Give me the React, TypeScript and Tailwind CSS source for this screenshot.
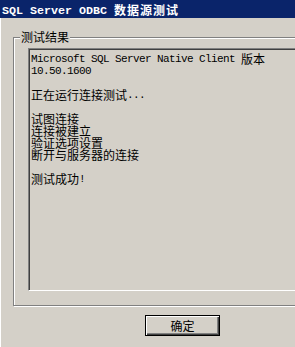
import React from "react";

const CJK = /([\u3000-\u303f\u3400-\u9fff\uff00-\uffef]+)/;

function Mixed({ text, cjkClass }: { text: string; cjkClass: string }) {
  const parts = text.split(CJK).filter((p) => p.length > 0);
  return (
    <>
      {parts.map((p, i) =>
        CJK.test(p) ? (
          <span key={i} className={cjkClass}>
            {p}
          </span>
        ) : (
          <span key={i}>{p}</span>
        )
      )}
    </>
  );
}

const bodyCjk =
  "font-['Noto_Sans_CJK_SC',sans-serif] text-[12px] tracking-normal leading-[0] align-[-1.5px]";
const titleCjk =
  "font-['Noto_Sans_CJK_SC',sans-serif] text-[12px] font-bold tracking-[1px] leading-[0] align-[-1px]";

const lines = [
  "Microsoft SQL Server Native Client 版本",
  "10.50.1600",
  "",
  "正在运行连接测试...",
  "",
  "试图连接",
  "连接被建立",
  "验证选项设置",
  "断开与服务器的连接",
  "",
  "测试成功!",
];

export default function App() {
  return (
    <div className="w-[295px] h-[347px] overflow-hidden bg-[#d4d0c8] text-black font-['Liberation_Mono',monospace]">
      <div className="h-[18px] bg-[#0a246a] pl-[2px] pt-[3px] leading-[16px] text-[11.67px] font-bold text-white whitespace-pre overflow-hidden">
        <Mixed text="SQL Server ODBC 数据源测试" cjkClass={titleCjk} />
      </div>
      <div className="flex flex-col border-l border-white h-[329px]">
        <div className="relative mt-[19px] ml-[12px] w-[400px] h-[269px] shrink-0 border border-[#808080] shadow-[inset_1px_1px_0_#fff,1px_1px_0_#fff]">
          <div className="absolute left-[6px] top-[-7px] h-[12px] px-[1px] bg-[#d4d0c8] font-['Noto_Sans_CJK_SC',sans-serif] text-[12px] leading-[12px] whitespace-nowrap">
            测试结果
          </div>
          <div className="mt-[10px] ml-[14px] w-[400px] h-[243px] border border-t-[#808080] border-l-[#808080] border-b-white border-r-white shadow-[inset_1px_1px_0_#404040] pt-[4px] pl-[2px] text-[11px] tracking-[-0.6px]">
            {lines.map((l, i) => (
              <div key={i} className="h-[12px] leading-[12px] whitespace-pre">
                <Mixed text={l} cjkClass={bodyCjk} />
              </div>
            ))}
          </div>
        </div>
        <button className="mt-[9px] ml-[144px] w-[75px] h-[21px] shrink-0 border border-black bg-[#d4d0c8] shadow-[inset_1px_1px_0_#fff,inset_-1px_-1px_0_#404040,inset_-2px_-2px_0_#808080] flex items-center justify-center font-['Noto_Sans_CJK_SC',sans-serif] text-[12px] leading-[12px] text-black">
          确定
        </button>
      </div>
    </div>
  );
}
